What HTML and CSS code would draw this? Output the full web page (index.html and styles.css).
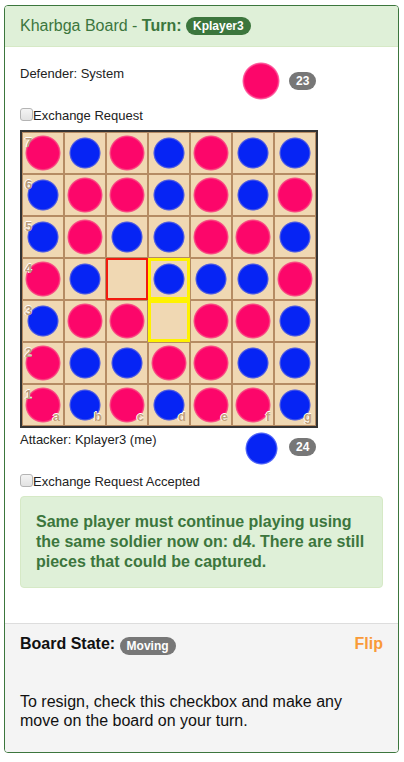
FILE: index.html
```html
<!DOCTYPE html>
<html>
<head>
<meta charset="utf-8">
<link rel="stylesheet" href="styles.css">
</head>
<body>
<div class="panel">
  <div class="panel-heading">Kharbga Board - <b>Turn:</b> <span class="badge badge-turn">Kplayer3</span></div>
  <div class="panel-body">
    <div class="player-row">
      <div class="player-name">Defender: System</div>
      <div class="player-info"><span class="slot"><span class="piece pink big"></span></span><span class="badge">23</span></div>
    </div>
    <label class="check-row"><input type="checkbox">Exchange Request</label>
    <div class="board">
      <div class="cell"><span class="rank">7</span><span class="piece pink"></span></div>
      <div class="cell"><span class="piece blue"></span></div>
      <div class="cell"><span class="piece pink"></span></div>
      <div class="cell"><span class="piece blue"></span></div>
      <div class="cell"><span class="piece pink"></span></div>
      <div class="cell"><span class="piece blue"></span></div>
      <div class="cell"><span class="piece blue"></span></div>

      <div class="cell"><span class="rank">6</span><span class="piece blue"></span></div>
      <div class="cell"><span class="piece pink"></span></div>
      <div class="cell"><span class="piece pink"></span></div>
      <div class="cell"><span class="piece blue"></span></div>
      <div class="cell"><span class="piece pink"></span></div>
      <div class="cell"><span class="piece blue"></span></div>
      <div class="cell"><span class="piece pink"></span></div>

      <div class="cell"><span class="rank">5</span><span class="piece blue"></span></div>
      <div class="cell"><span class="piece pink"></span></div>
      <div class="cell"><span class="piece blue"></span></div>
      <div class="cell"><span class="piece blue"></span></div>
      <div class="cell"><span class="piece pink"></span></div>
      <div class="cell"><span class="piece pink"></span></div>
      <div class="cell"><span class="piece blue"></span></div>

      <div class="cell"><span class="rank">4</span><span class="piece pink"></span></div>
      <div class="cell"><span class="piece blue"></span></div>
      <div class="cell cell-from"></div>
      <div class="cell cell-to"><span class="piece blue"></span></div>
      <div class="cell"><span class="piece blue"></span></div>
      <div class="cell"><span class="piece blue"></span></div>
      <div class="cell"><span class="piece pink"></span></div>

      <div class="cell"><span class="rank">3</span><span class="piece blue"></span></div>
      <div class="cell"><span class="piece pink"></span></div>
      <div class="cell"><span class="piece pink"></span></div>
      <div class="cell cell-to"></div>
      <div class="cell"><span class="piece pink"></span></div>
      <div class="cell"><span class="piece pink"></span></div>
      <div class="cell"><span class="piece blue"></span></div>

      <div class="cell"><span class="rank">2</span><span class="piece pink"></span></div>
      <div class="cell"><span class="piece blue"></span></div>
      <div class="cell"><span class="piece blue"></span></div>
      <div class="cell"><span class="piece pink"></span></div>
      <div class="cell"><span class="piece pink"></span></div>
      <div class="cell"><span class="piece blue"></span></div>
      <div class="cell"><span class="piece blue"></span></div>

      <div class="cell"><span class="rank">1</span><span class="piece pink"></span><span class="file">a</span></div>
      <div class="cell"><span class="piece blue"></span><span class="file">b</span></div>
      <div class="cell"><span class="piece pink"></span><span class="file">c</span></div>
      <div class="cell"><span class="piece blue"></span><span class="file">d</span></div>
      <div class="cell"><span class="piece pink"></span><span class="file">e</span></div>
      <div class="cell"><span class="piece pink"></span><span class="file">f</span></div>
      <div class="cell"><span class="piece blue"></span><span class="file">g</span></div>
    </div>
    <div class="player-row">
      <div class="player-name">Attacker: Kplayer3 (me)</div>
      <div class="player-info"><span class="slot slot-low"><span class="piece blue big-blue"></span></span><span class="badge">24</span></div>
    </div>
    <label class="check-row"><input type="checkbox">Exchange Request Accepted</label>
    <div class="alert">Same player must continue playing using the same soldier now on: d4. There are still pieces that could be captured.</div>
  </div>
  <div class="panel-footer">
    <div class="state-row">
      <div>Board State: <span class="badge">Moving</span></div>
      <div class="flip">Flip</div>
    </div>
    <div class="resign">To resign, check this checkbox and make any move on the board on your turn.</div>
  </div>
</div>
</body>
</html>
```
FILE: styles.css
```css
html, body {
  margin: 0;
  padding: 0;
  background: #fff;
}
body {
  font-family: "Liberation Sans", Arial, sans-serif;
  color: #222;
}
.panel {
  margin: 5px 5px 0 4px;
  border: 1px solid #3c763d;
  border-radius: 4px;
  background: #fff;
}
.panel-heading {
  background: #dff0d8;
  color: #3c763d;
  font-size: 16px;
  line-height: 20px;
  padding: 10px 15px;
  border-bottom: 1px solid #d6e9c6;
  border-radius: 3px 3px 0 0;
}
.badge {
  display: inline-block;
  min-width: 10px;
  padding: 3px 7px;
  font-size: 12px;
  font-weight: bold;
  line-height: 12px;
  color: #fff;
  background: #777;
  border-radius: 10px;
  text-align: center;
  vertical-align: middle;
}
.badge-turn {
  background: #3c763d;
  position: relative;
  top: -1px;
}
.panel-body {
  padding: 15px;
  font-size: 13px;
  line-height: 20px;
}
.player-row {
  display: flex;
  align-items: flex-start;
}
.player-name {
  width: 222px;
  padding-top: 2px;
}
.player-info {
  display: flex;
  align-items: center;
  height: 38px;
}
.slot {
  width: 38px;
  height: 38px;
  display: flex;
  align-items: center;
  justify-content: center;
}
.slot-low {
  margin-top: 2px;
}
.player-info .badge {
  margin-left: 9px;
}
.check-row {
  display: flex;
  align-items: flex-start;
  margin-top: 6px;
  line-height: 20px;
}
.check-row input {
  -webkit-appearance: none;
  appearance: none;
  box-sizing: border-box;
  width: 13px;
  height: 13px;
  margin: 2px 0 0 0;
  border: 1px solid #b4b4b4;
  border-radius: 3px;
  background: linear-gradient(#f4f4f4, #e2e2e2);
}
.board {
  margin-top: 4px;
  display: grid;
  grid-template-columns: repeat(7, 42px);
  grid-auto-rows: 42px;
  width: max-content;
  border: 2px solid #333;
}
.cell {
  box-sizing: border-box;
  position: relative;
  border: 1px solid #b58b63;
  background: #f0d8b3;
  display: flex;
  align-items: center;
  justify-content: center;
}
.cell-from {
  border: 2px solid #f21a0f;
}
.cell-to {
  border: 3px solid #fff200;
}
.piece {
  display: block;
  width: 36px;
  height: 36px;
  border-radius: 50%;
}
.pink {
  background: radial-gradient(circle closest-side, #fc066a 86%, rgba(252, 6, 106, 0.6) 95%, rgba(252, 6, 106, 0) 100%);
}
.blue {
  width: 32px;
  height: 32px;
  background: radial-gradient(circle closest-side, #0624f4 86%, rgba(6, 36, 244, 0.6) 95%, rgba(6, 36, 244, 0) 100%);
}
.big {
  width: 38px;
  height: 38px;
}
.big-blue {
  width: 33px;
  height: 33px;
}
.rank, .file {
  position: absolute;
  z-index: 1;
  font-size: 13px;
  font-weight: bold;
  line-height: 14px;
  color: #b89a7a;
  text-shadow: -1px 0 0 #fff, 0 -1px 0 #fff;
}
.rank {
  top: 3px;
  left: 2px;
}
.file {
  bottom: 1px;
  right: 3px;
  color: #c4a27b;
}
.alert {
  margin-top: 4px;
  margin-bottom: 20px;
  padding: 15px;
  background: #dff0d8;
  border: 1px solid #d6e9c6;
  border-radius: 4px;
  color: #3c763d;
  font-size: 16px;
  font-weight: bold;
  line-height: 20px;
}
.panel-footer {
  background: #f4f4f4;
  border-top: 1px solid #ddd;
  padding: 10px 15px;
  border-radius: 0 0 3px 3px;
}
.state-row {
  display: flex;
  justify-content: space-between;
  font-size: 16px;
  font-weight: bold;
  line-height: 20px;
  color: #111;
}
.state-row .badge {
  position: relative;
  top: 1px;
}
.flip {
  color: #f99a38;
}
.resign {
  margin-top: 38px;
  margin-bottom: 11px;
  font-size: 16px;
  line-height: 19.4px;
  color: #111;
}
```
